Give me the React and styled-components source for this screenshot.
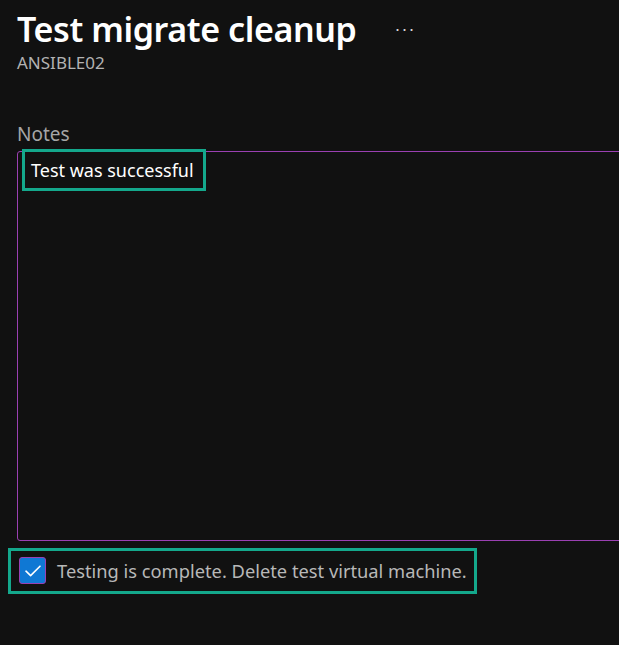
import React from "react";
import styled, { createGlobalStyle } from "styled-components";

const GlobalStyle = createGlobalStyle`
  html, body {
    margin: 0;
    padding: 0;
    background: #111111;
  }
  body {
    font-family: "Noto Sans", "Open Sans", sans-serif;
    color: #ffffff;
    overflow: hidden;
  }
`;

const Page = styled.div`
  width: 619px;
  height: 645px;
  padding: 7px 0 0 17px;
  box-sizing: border-box;
  background: #111111;
  overflow: hidden;
`;

const Header = styled.div`
  display: flex;
  align-items: flex-start;
`;

const Title = styled.h1`
  margin: 0;
  font-size: 34px;
  font-weight: 600;
  line-height: 44px;
  letter-spacing: -0.4px;
  color: #ffffff;
`;

const MoreButton = styled.button`
  margin: 12px 0 0 38px;
  padding: 0;
  border: none;
  background: none;
  color: #d8d8d8;
  font-size: 18px;
  line-height: 20px;
  letter-spacing: 1px;
  cursor: pointer;
`;

const Subtitle = styled.div`
  font-size: 17px;
  line-height: 22px;
  color: #b3b3b3;
  margin-top: 1px;
`;

const FieldLabel = styled.div`
  margin-top: 47px;
  font-size: 19px;
  line-height: 26px;
  color: #a6a6a6;
`;

const NoteBox = styled.div`
  margin: 4px -12px 0 0;
  height: 390px;
  box-sizing: border-box;
  border: 1px solid #9a40b2;
  border-radius: 3px 0 0 3px;
  padding: 0 0 0 4px;
`;

const Highlight = styled.span`
  display: inline-block;
  border: 3px solid #14a88c;
  margin-top: -3px;
  padding: 5px 9px 5px 6px;
  font-size: 18px;
  line-height: 26px;
  color: #ffffff;
`;

const CheckRow = styled.label`
  display: inline-flex;
  align-items: center;
  gap: 11px;
  margin: 7px 0 0 -9px;
  padding: 6px 7px 7px 8px;
  border: 3px solid #14a88c;
  cursor: pointer;
`;

const Box = styled.span`
  width: 27px;
  height: 27px;
  box-sizing: border-box;
  border: 1px solid #9a40b2;
  border-radius: 3px;
  background: ${(p) => (p.checked ? "#0f78d4" : "transparent")};
  display: flex;
  align-items: center;
  justify-content: center;
`;

const CheckText = styled.span`
  font-size: 18.3px;
  line-height: 26px;
  color: #b8b8b8;
`;

export default function App() {
  return (
    <Page>
      <GlobalStyle />
      <Header>
        <Title>Test migrate cleanup</Title>
        <MoreButton aria-label="More actions">···</MoreButton>
      </Header>
      <Subtitle>ANSIBLE02</Subtitle>
      <FieldLabel>Notes</FieldLabel>
      <NoteBox role="textbox">
        <Highlight>Test was successful</Highlight>
      </NoteBox>
      <CheckRow>
        <Box checked>
          <svg width="16" height="12" viewBox="0 0 16 12" fill="none">
            <path d="M1 6.2 L5.6 10.6 L15 1.2" stroke="#ffffff" strokeWidth="1.6" strokeLinecap="round" strokeLinejoin="round" />
          </svg>
        </Box>
        <CheckText>Testing is complete. Delete test virtual machine.</CheckText>
      </CheckRow>
    </Page>
  );
}
